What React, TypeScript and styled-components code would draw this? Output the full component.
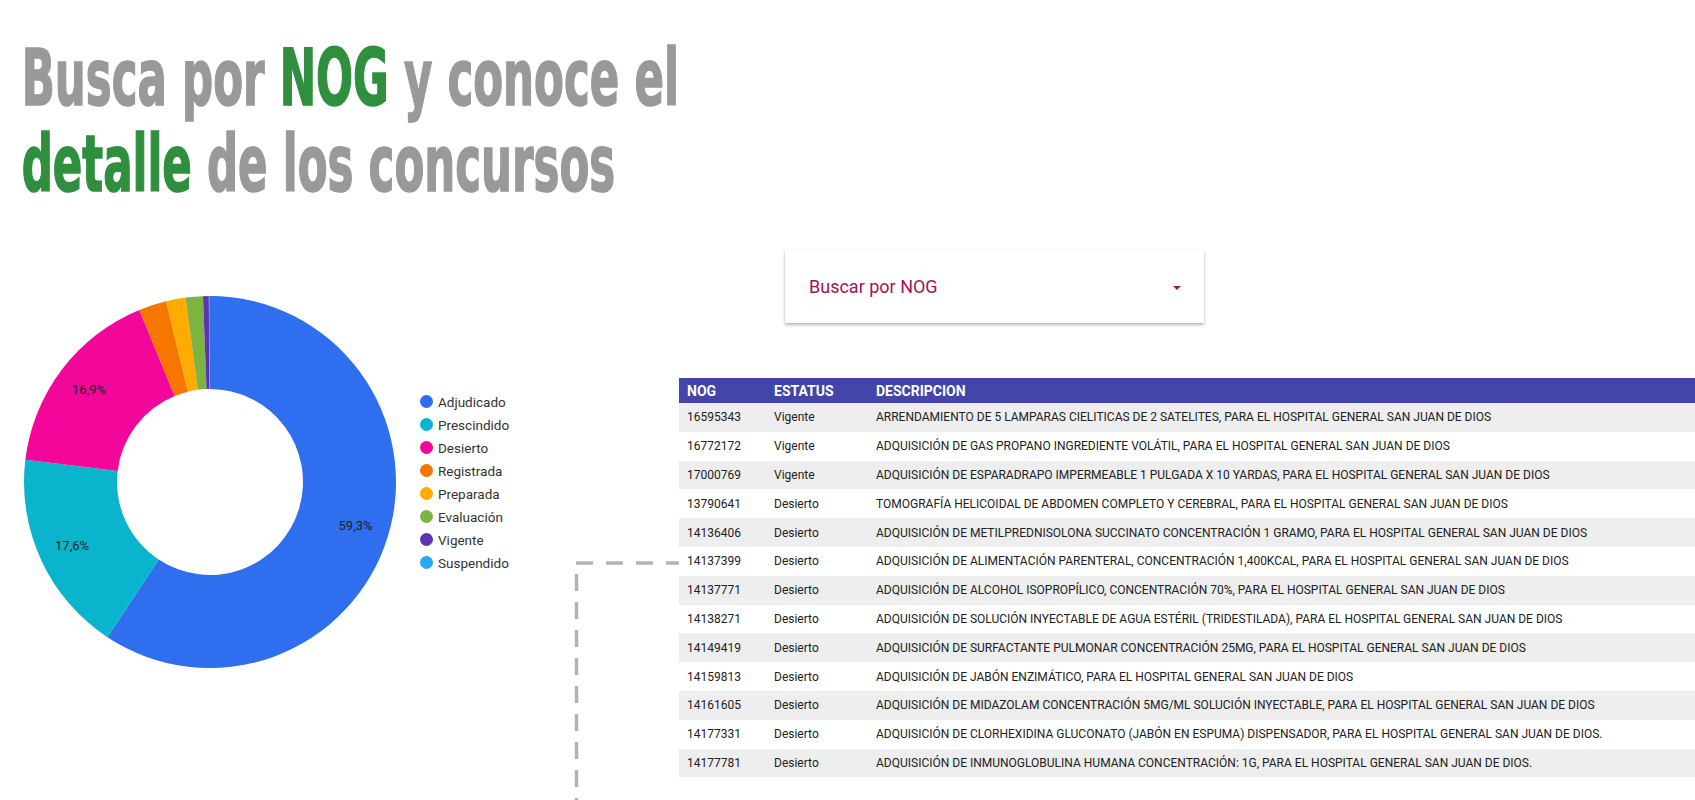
import styled, { createGlobalStyle } from "styled-components";

const GlobalStyle = createGlobalStyle`
  html, body {
    margin: 0;
    padding: 0;
    background: #ffffff;
    overflow: hidden;
  }
  body {
    font-family: Roboto, "Liberation Sans", sans-serif;
  }
`;

type Slice = { label: string; value: number; color: string };

const slices: Slice[] = [
  { label: "Adjudicado", value: 59.3, color: "#2f6eee" },
  { label: "Prescindido", value: 17.6, color: "#0ab4cc" },
  { label: "Desierto", value: 16.9, color: "#f2079a" },
  { label: "Registrada", value: 2.4, color: "#f77600" },
  { label: "Preparada", value: 1.7, color: "#ffab00" },
  { label: "Evaluación", value: 1.5, color: "#7cb342" },
  { label: "Vigente", value: 0.5, color: "#5e33b0" },
  { label: "Suspendido", value: 0.1, color: "#29a9f2" },
];

const rows = [
  ["16595343", "Vigente", "ARRENDAMIENTO DE 5 LAMPARAS CIELITICAS DE 2 SATELITES, PARA EL HOSPITAL GENERAL SAN JUAN DE DIOS"],
  ["16772172", "Vigente", "ADQUISICIÓN DE GAS PROPANO INGREDIENTE VOLÁTIL, PARA EL HOSPITAL GENERAL SAN JUAN DE DIOS"],
  ["17000769", "Vigente", "ADQUISICIÓN DE ESPARADRAPO IMPERMEABLE 1 PULGADA X 10 YARDAS, PARA EL HOSPITAL GENERAL SAN JUAN DE DIOS"],
  ["13790641", "Desierto", "TOMOGRAFÍA HELICOIDAL DE ABDOMEN COMPLETO Y CEREBRAL, PARA EL HOSPITAL GENERAL SAN JUAN DE DIOS"],
  ["14136406", "Desierto", "ADQUISICIÓN DE METILPREDNISOLONA SUCCINATO CONCENTRACIÓN 1 GRAMO, PARA EL HOSPITAL GENERAL SAN JUAN DE DIOS"],
  ["14137399", "Desierto", "ADQUISICIÓN DE ALIMENTACIÓN PARENTERAL, CONCENTRACIÓN 1,400KCAL, PARA EL HOSPITAL GENERAL SAN JUAN DE DIOS"],
  ["14137771", "Desierto", "ADQUISICIÓN DE ALCOHOL ISOPROPÍLICO, CONCENTRACIÓN 70%, PARA EL HOSPITAL GENERAL SAN JUAN DE DIOS"],
  ["14138271", "Desierto", "ADQUISICIÓN DE SOLUCIÓN INYECTABLE DE AGUA ESTÉRIL (TRIDESTILADA), PARA EL HOSPITAL GENERAL SAN JUAN DE DIOS"],
  ["14149419", "Desierto", "ADQUISICIÓN DE SURFACTANTE PULMONAR CONCENTRACIÓN 25MG, PARA EL HOSPITAL GENERAL SAN JUAN DE DIOS"],
  ["14159813", "Desierto", "ADQUISICIÓN DE JABÓN ENZIMÁTICO, PARA EL HOSPITAL GENERAL SAN JUAN DE DIOS"],
  ["14161605", "Desierto", "ADQUISICIÓN DE MIDAZOLAM CONCENTRACIÓN 5MG/ML SOLUCIÓN INYECTABLE, PARA EL HOSPITAL GENERAL SAN JUAN DE DIOS"],
  ["14177331", "Desierto", "ADQUISICIÓN DE CLORHEXIDINA GLUCONATO (JABÓN EN ESPUMA) DISPENSADOR, PARA EL HOSPITAL GENERAL SAN JUAN DE DIOS."],
  ["14177781", "Desierto", "ADQUISICIÓN DE INMUNOGLOBULINA HUMANA CONCENTRACIÓN: 1G, PARA EL HOSPITAL GENERAL SAN JUAN DE DIOS."],
];

// donut geometry
const CX = 210;
const CY = 200;
const R_OUT = 186;
const R_IN = 93;
const R_LABEL = 152;

function point(r: number, deg: number) {
  const a = (deg * Math.PI) / 180;
  return [CX + r * Math.sin(a), CY - r * Math.cos(a)];
}

function arcPath(start: number, end: number) {
  const large = end - start > 180 ? 1 : 0;
  const [x1, y1] = point(R_OUT, start);
  const [x2, y2] = point(R_OUT, end);
  const [x3, y3] = point(R_IN, end);
  const [x4, y4] = point(R_IN, start);
  return `M${x1} ${y1} A${R_OUT} ${R_OUT} 0 ${large} 1 ${x2} ${y2} L${x3} ${y3} A${R_IN} ${R_IN} 0 ${large} 0 ${x4} ${y4} Z`;
}

function Donut() {
  let acc = 0;
  const parts = slices.map((s) => {
    const start = acc * 3.6;
    acc += s.value;
    const end = acc * 3.6;
    return { ...s, start, end };
  });
  return (
    <ChartSvg width={420} height={400} viewBox="0 0 420 400">
      {parts.map((p) => (
        <path key={p.label} d={arcPath(p.start, p.end)} fill={p.color} />
      ))}
      {parts
        .filter((p) => p.value > 5)
        .map((p) => {
          const [x, y] = point(R_LABEL, (p.start + p.end) / 2);
          return (
            <text key={p.label} x={x} y={y + 4.5} textAnchor="middle">
              {p.value.toFixed(1).replace(".", ",")}%
            </text>
          );
        })}
    </ChartSvg>
  );
}

function App() {
  return (
    <Page>
      <GlobalStyle />
      <Title>
        <span>
          Busca por <Mark>NOG</Mark> y conoce el
        </span>
        <span>
          <Mark>detalle</Mark> de los concursos
        </span>
      </Title>
      <Main>
        <ChartPanel>
          <Donut />
          <Legend>
            {slices.map((s) => (
              <LegendItem key={s.label}>
                <Dot color={s.color} />
                {s.label}
              </LegendItem>
            ))}
          </Legend>
        </ChartPanel>
        <RightPanel>
          <SelectBox>
            <span>Buscar por NOG</span>
            <Caret />
          </SelectBox>
          <TableArea>
            <Connector width={104} height={400} viewBox="0 0 104 400">
              <line x1={1} y1={185} x2={104} y2={185} strokeDasharray="17 13" />
              <line x1={1.5} y1={196} x2={1.5} y2={480} strokeDasharray="17 11" />
            </Connector>
            <Table>
              <colgroup>
                <col style={{ width: 87 }} />
                <col style={{ width: 102 }} />
                <col />
              </colgroup>
              <thead>
                <tr>
                  <Th>NOG</Th>
                  <Th>ESTATUS</Th>
                  <Th>DESCRIPCION</Th>
                </tr>
              </thead>
              <tbody>
                {rows.map((r, i) => (
                  <Row key={r[0]} $shaded={i % 2 === 0}>
                    <Td>{r[0]}</Td>
                    <Td>{r[1]}</Td>
                    <Td>{r[2]}</Td>
                  </Row>
                ))}
              </tbody>
            </Table>
          </TableArea>
        </RightPanel>
      </Main>
    </Page>
  );
}

const Page = styled.div`
  width: 1695px;
  height: 800px;
`;

const Title = styled.h1`
  margin: 0;
  padding: 35px 0 0 35px;
  display: flex;
  flex-direction: column;
  align-items: flex-start;
  font-family: "Liberation Sans Narrow", "DejaVu Sans Condensed", "Liberation Sans", sans-serif;
  font-weight: 700;
  font-size: 78px;
  line-height: 86px;
  color: #999999;
  -webkit-text-stroke: 1.6px currentColor;
  transform: scaleX(0.62);
  transform-origin: left top;
  white-space: nowrap;
`;

const Mark = styled.span`
  color: #2f8f3e;
`;

const Main = styled.div`
  display: grid;
  grid-template-columns: 575px 1fr;
  margin-top: 43px;
`;

const ChartPanel = styled.div`
  display: flex;
  align-items: center;
  margin-top: 32px;
  align-self: start;
`;

const ChartSvg = styled.svg`
  display: block;
  flex: none;
  text {
    font-family: Roboto, "Liberation Sans", sans-serif;
    font-size: 13px;
    fill: #222222;
  }
`;

const Legend = styled.ul`
  list-style: none;
  margin: 0;
  padding: 0;
  display: flex;
  flex-direction: column;
`;

const LegendItem = styled.li`
  display: flex;
  align-items: center;
  gap: 5px;
  height: 23px;
  font-size: 13.5px;
  color: #333333;
`;

const Dot = styled.span<{ color: string }>`
  width: 13px;
  height: 13px;
  border-radius: 50%;
  background: ${(p) => p.color};
  flex: none;
`;

const RightPanel = styled.div`
  display: flex;
  flex-direction: column;
  align-items: flex-start;
`;

const SelectBox = styled.div`
  margin-left: 210px;
  width: 419px;
  height: 73px;
  box-sizing: border-box;
  padding: 0 23px 0 24px;
  display: flex;
  align-items: center;
  justify-content: space-between;
  background: #ffffff;
  box-shadow: 0 2px 3px rgba(0, 0, 0, 0.28), 0 0 2px rgba(0, 0, 0, 0.08);
  color: #9e1459;
  font-size: 18px;
`;

const Caret = styled.span`
  width: 0;
  height: 0;
  border-left: 4px solid transparent;
  border-right: 4px solid transparent;
  border-top: 4px solid #9e1459;
  margin-top: 2px;
`;

const TableArea = styled.div`
  margin-top: 55px;
  display: grid;
  grid-template-columns: 104px 1016px;
  align-items: start;
`;

const Connector = styled.svg`
  display: block;
  overflow: visible;
  line {
    stroke: #b3b3b3;
    stroke-width: 3.5px;
  }
`;

const Table = styled.table`
  width: 1016px;
  table-layout: fixed;
  border-collapse: collapse;
  font-size: 12px;
  color: #212121;
`;

const Th = styled.th`
  height: 25px;
  padding: 0 8px;
  box-sizing: border-box;
  text-align: left;
  background: #4345a9;
  color: #ffffff;
  font-weight: 700;
  font-size: 14px;
`;

const Row = styled.tr<{ $shaded: boolean }>`
  background: ${(p) => (p.$shaded ? "#eeeeee" : "#ffffff")};
`;

const Td = styled.td`
  height: 28.8px;
  padding: 0 8px;
  box-sizing: border-box;
  white-space: nowrap;
  overflow: hidden;
`;

export default App;
